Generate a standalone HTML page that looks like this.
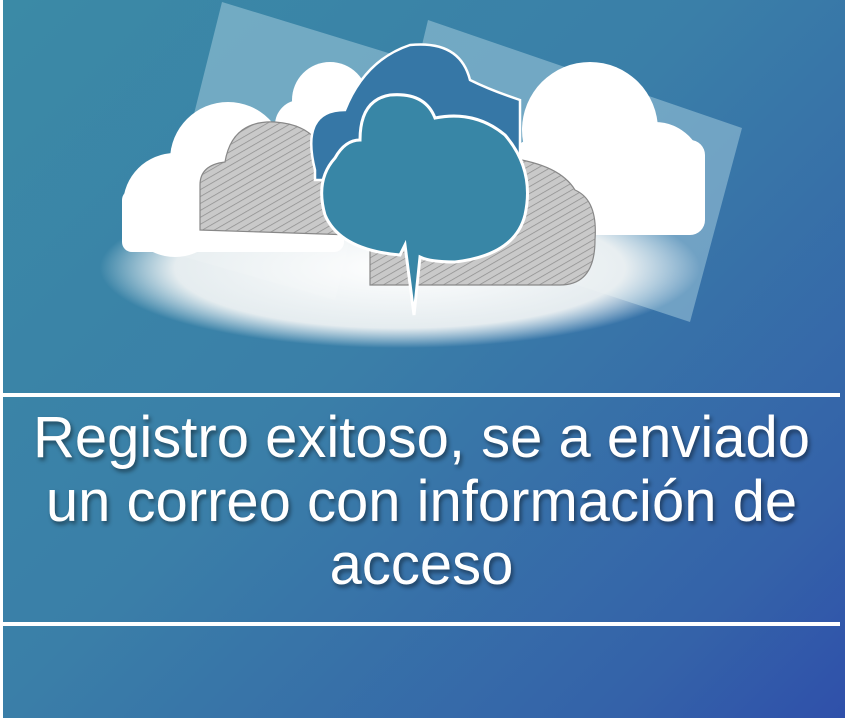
<!DOCTYPE html>
<html><head><meta charset="utf-8"><style>
html,body{margin:0;padding:0}
body{width:845px;height:718px;overflow:hidden;position:relative;background:linear-gradient(135deg,#3b8aa6 0%,#3a7fa8 45%,#3462a9 85%,#2f50aa 100%);font-family:"Liberation Sans",Arial,sans-serif}
.lb{position:absolute;left:0;top:0;width:3px;height:718px;background:#fff}
.hl{position:absolute;left:3px;width:837px;height:4px;background:#fff}
.t{position:absolute;left:3px;width:837px;top:406px;text-align:center;color:#fff;font-size:58px;line-height:63.5px;white-space:nowrap;text-shadow:2px 3px 4px rgba(0,0,0,.45)}
svg{position:absolute;left:0;top:0}
</style></head><body>
<svg width="845" height="390" viewBox="0 0 845 390">
<defs>
<pattern id="h" width="6" height="6" patternUnits="userSpaceOnUse" patternTransform="rotate(60)"><rect width="6" height="6" fill="#c9c9c9"/><line x1="0" y1="0" x2="0" y2="6" stroke="#8e8e8e" stroke-width="1.5"/></pattern>
<radialGradient id="g" cx="50%" cy="50%" r="50%"><stop offset="0" stop-color="#fff" stop-opacity="1"/><stop offset=".75" stop-color="#eef2f3" stop-opacity=".95"/><stop offset="1" stop-color="#fff" stop-opacity="0"/></radialGradient>
</defs>
<polygon points="222,2 395,55 335,300 160,250" fill="#a9d0e0" opacity=".5"/>
<polygon points="428,20 742,128 690,322 380,220" fill="#a9d0e0" opacity=".5"/>
<ellipse cx="400" cy="268" rx="300" ry="80" fill="url(#g)"/>
<g fill="#fff">
<circle cx="175" cy="205" r="52"/><circle cx="228" cy="160" r="58"/><rect x="122" y="190" width="222" height="62" rx="10"/>
<circle cx="330" cy="100" r="38"/><circle cx="300" cy="125" r="25"/>
<circle cx="590" cy="130" r="68"/><circle cx="655" cy="170" r="48"/><rect x="515" y="140" width="190" height="95" rx="15"/>
</g>
<g fill="url(#h)" stroke="#888" stroke-width="1.2">
<path d="M200,230 L200,185 Q200,165 225,162 Q232,120 275,122 Q318,125 325,160 Q352,165 352,200 L352,235 Z"/>
<path d="M370,285 L370,220 Q380,165 440,168 Q470,150 510,158 Q560,165 575,190 Q598,200 595,240 Q595,285 560,285 Z"/>
</g>
<path d="M315,170 Q300,110 345,110 Q365,60 410,45 Q460,40 470,80 Q490,90 520,100 L520,180 L315,180 Z" fill="#3677a6" stroke="#fff" stroke-width="2.5"/>
<path d="M400,255 Q340,250 325,215 Q315,180 335,158 Q345,140 360,140 Q360,100 390,95 Q425,92 435,118 Q475,110 505,135 Q535,170 525,215 Q515,255 455,262 Q430,262 420,257 L414,315 L405,245 Z" fill="#3886a6" stroke="#fff" stroke-width="3"/>
</svg>
<div class="lb"></div>
<div class="hl" style="top:393px"></div>
<div class="hl" style="top:622px"></div>
<div class="t">Registro exitoso, se a enviado<br>un correo con información de<br>acceso</div>
</body></html>
